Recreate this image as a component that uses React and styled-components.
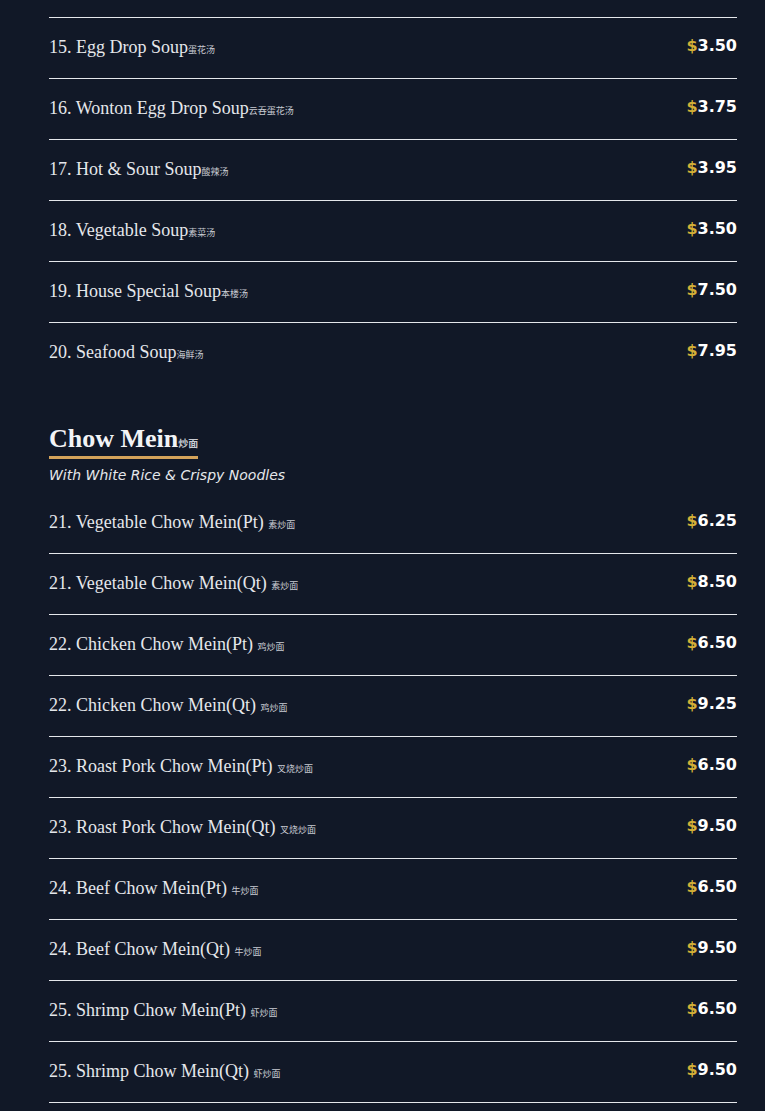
import React from 'react';
import styled, { createGlobalStyle } from 'styled-components';

const GlobalStyle = createGlobalStyle`
  html, body {
    margin: 0;
    padding: 0;
    background: #111827;
  }
  body {
    font-family: "Liberation Serif", "Noto Sans CJK SC", serif;
    color: #e5e7eb;
  }
`;

const Page = styled.div`
  min-height: 100vh;
  background: #111827;
  padding: 17px 28px 0 49px;
`;

const Section = styled.section`
  & + & {
    margin-top: 42px;
  }
`;

const SectionTitle = styled.h2`
  display: inline-block;
  margin: 0;
  font-family: "Liberation Serif", "Noto Sans CJK SC", serif;
  font-size: 26px;
  font-weight: 700;
  line-height: 26px;
  color: #f3f4f6;
  border-bottom: 3px solid #d4a35a;
`;

const SectionNote = styled.p`
  margin: 6px 0 8px;
  font-family: "DejaVu Sans", sans-serif;
  font-style: italic;
  font-size: 14px;
  line-height: 20px;
  color: #e5e7eb;
`;

const List = styled.ul`
  list-style: none;
  margin: 0;
  padding: 0;
  border-top: ${p => (p.$ruled ? '1px solid #e5e7eb' : 'none')};

  & > li:last-child {
    border-bottom-color: ${p => (p.$closed ? 'transparent' : '#e5e7eb')};
  }
`;

const Row = styled.li`
  display: flex;
  justify-content: space-between;
  align-items: center;
  height: 60px;
  border-bottom: 1px solid #e5e7eb;
`;

const Name = styled.span`
  font-family: "Liberation Serif", serif;
  font-size: 18px;
  line-height: 24px;
  color: #e5e7eb;
`;

const Hanzi = styled.span`
  font-family: "Noto Sans CJK SC", sans-serif;
  font-size: ${p => (p.$big ? '10px' : '9px')};
  color: #c9ccd3;
`;

const Price = styled.span`
  align-self: flex-start;
  margin-top: 18px;
  font-family: "DejaVu Sans", sans-serif;
  font-weight: 700;
  font-size: 16px;
  line-height: 19px;
  color: #ffffff;
`;

const Dollar = styled.span`
  color: #d4af37;
`;

const soups = [
  { no: 15, name: 'Egg Drop Soup', zh: '蛋花汤', price: '3.50' },
  { no: 16, name: 'Wonton Egg Drop Soup', zh: '云吞蛋花汤', price: '3.75' },
  { no: 17, name: 'Hot & Sour Soup', zh: '酸辣汤', price: '3.95' },
  { no: 18, name: 'Vegetable Soup', zh: '素菜汤', price: '3.50' },
  { no: 19, name: 'House Special Soup', zh: '本楼汤', price: '7.50' },
  { no: 20, name: 'Seafood Soup', zh: '海鲜汤', price: '7.95' },
];

const chowMein = [
  { no: 21, name: 'Vegetable Chow Mein(Pt)', zh: '素炒面', price: '6.25' },
  { no: 21, name: 'Vegetable Chow Mein(Qt)', zh: '素炒面', price: '8.50' },
  { no: 22, name: 'Chicken Chow Mein(Pt)', zh: '鸡炒面', price: '6.50' },
  { no: 22, name: 'Chicken Chow Mein(Qt)', zh: '鸡炒面', price: '9.25' },
  { no: 23, name: 'Roast Pork Chow Mein(Pt)', zh: '叉烧炒面', price: '6.50' },
  { no: 23, name: 'Roast Pork Chow Mein(Qt)', zh: '叉烧炒面', price: '9.50' },
  { no: 24, name: 'Beef Chow Mein(Pt)', zh: '牛炒面', price: '6.50' },
  { no: 24, name: 'Beef Chow Mein(Qt)', zh: '牛炒面', price: '9.50' },
  { no: 25, name: 'Shrimp Chow Mein(Pt)', zh: '虾炒面', price: '6.50' },
  { no: 25, name: 'Shrimp Chow Mein(Qt)', zh: '虾炒面', price: '9.50' },
];

const MenuRow = ({ item, spaced }) => (
  <Row>
    <Name>
      {item.no}. {item.name}
      {spaced ? ' ' : ''}
      <Hanzi>{item.zh}</Hanzi>
    </Name>
    <Price>
      <Dollar>$</Dollar>
      {item.price}
    </Price>
  </Row>
);

export default function App() {
  return (
    <>
      <GlobalStyle />
      <Page>
        <Section>
          <List $ruled $closed>
            {soups.map(item => (
              <MenuRow key={item.no} item={item} />
            ))}
          </List>
        </Section>

        <Section>
          <SectionTitle>
            Chow Mein<Hanzi $big>炒面</Hanzi>
          </SectionTitle>
          <SectionNote>With White Rice &amp; Crispy Noodles</SectionNote>
          <List>
            {chowMein.map((item, i) => (
              <MenuRow key={i} item={item} spaced />
            ))}
          </List>
        </Section>
      </Page>
    </>
  );
}
